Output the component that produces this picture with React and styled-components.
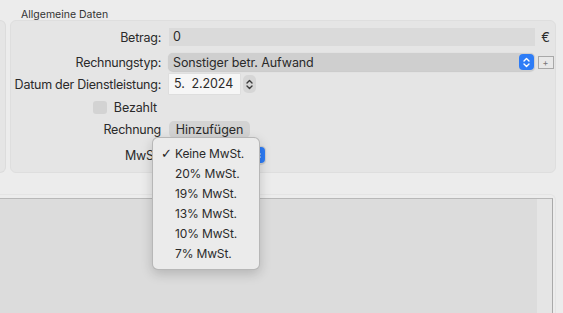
import React from 'react'
import styled, { createGlobalStyle } from 'styled-components'

const GlobalStyle = createGlobalStyle`
    html, body {
        margin: 0;
        padding: 0;
        background: #ececec;
    }
    * {
        box-sizing: border-box;
    }
`

const menuItems = [
    { label: 'Keine MwSt.', checked: true },
    { label: '20% MwSt.' },
    { label: '19% MwSt.' },
    { label: '13% MwSt.' },
    { label: '10% MwSt.' },
    { label: '7% MwSt.' },
]

const Chevrons = ({ color = '#fff', w = 7, h = 11 }) => (
    <svg width={w} height={h} viewBox="0 0 7 11" fill="none">
        <path d="M1 4 L3.5 1.5 L6 4" stroke={color} strokeWidth="1.4" strokeLinecap="round" strokeLinejoin="round" />
        <path d="M1 7 L3.5 9.5 L6 7" stroke={color} strokeWidth="1.4" strokeLinecap="round" strokeLinejoin="round" />
    </svg>
)

const App = () => {
    return (
        <Window>
            <GlobalStyle />
            <TopArea>
                <SidePanel />
                <Section>
                    <Title>Allgemeine Daten</Title>
                    <GroupBox>
                        <Row $mt={6}>
                            <Label>Betrag:</Label>
                            <TextField>0</TextField>
                            <Trailing>€</Trailing>
                        </Row>
                        <Row $mt={5}>
                            <Label>Rechnungstyp:</Label>
                            <PopUp $grow>
                                <span>Sonstiger betr. Aufwand</span>
                                <BlueArrows><Chevrons /></BlueArrows>
                            </PopUp>
                            <Trailing>
                                <SmallButton>+</SmallButton>
                            </Trailing>
                        </Row>
                        <Row $mt={2}>
                            <Label>Datum der Dienstleistung:</Label>
                            <DateField>5.&nbsp;&nbsp;2.2024</DateField>
                            <Stepper><Chevrons color="#3a3a3a" /></Stepper>
                        </Row>
                        <Row $mt={3}>
                            <CheckCell>
                                <CheckBox />
                                <span>Bezahlt</span>
                            </CheckCell>
                        </Row>
                        <Row $mt={2}>
                            <Label>Rechnung</Label>
                            <PushButton>Hinzufügen</PushButton>
                        </Row>
                        <Row $mt={6}>
                            <Label>MwSt:</Label>
                            <PopUp $w={98}>
                                <HiddenText>Keine MwSt.</HiddenText>
                                <BlueArrows><Chevrons /></BlueArrows>
                            </PopUp>
                        </Row>
                    </GroupBox>
                </Section>
            </TopArea>
            <BottomFrame>
                <TableArea>
                    <TableBody />
                    <ScrollTrack />
                </TableArea>
            </BottomFrame>
            <Menu>
                {menuItems.map((item) => (
                    <MenuItem key={item.label}>
                        <Check>{item.checked ? '✓' : ''}</Check>
                        {item.label}
                    </MenuItem>
                ))}
            </Menu>
        </Window>
    )
}

const Window = styled.div`
    position: relative;
    width: 100vw;
    height: 313px;
    overflow: hidden;
    background: #ececec;
    font-family: Inter, "Liberation Sans", sans-serif;
    font-size: 12.5px;
    letter-spacing: -0.1px;
    color: #2a2a2a;
    display: flex;
    flex-direction: column;
`

const TopArea = styled.div`
    display: flex;
    align-items: flex-start;
`

const SidePanel = styled.div`
    width: 6px;
    height: 153px;
    margin-top: 20px;
    background: #e5e5e5;
    border: 1px solid #dcdcdc;
    border-left: none;
    border-radius: 0 6px 6px 0;
`

const Section = styled.div`
    flex: 1;
    margin-left: 4px;
    margin-right: 7px;
    display: flex;
    flex-direction: column;
`

const Title = styled.div`
    height: 12px;
    margin-top: 8px;
    padding-left: 11px;
    font-size: 10.5px;
    line-height: 13px;
    letter-spacing: 0;
    color: #333;
`

const GroupBox = styled.div`
    height: 153px;
    background: #e5e5e5;
    border: 1px solid #dedede;
    border-radius: 6px;
    display: flex;
    flex-direction: column;
`

const Row = styled.div`
    display: flex;
    align-items: center;
    height: 20px;
    margin-top: ${(p) => p.$mt}px;
`

const Label = styled.div`
    width: 150px;
    flex-shrink: 0;
    text-align: right;
    margin-right: 8px;
    white-space: nowrap;
    letter-spacing: -0.25px;
`

const TextField = styled.div`
    flex: 1;
    height: 18px;
    line-height: 18px;
    padding-left: 4px;
    background: #dadada;
`

const Trailing = styled.div`
    width: 20px;
    flex-shrink: 0;
    display: flex;
    justify-content: center;
    padding-left: 1px;
    font-size: 13px;
`

const PopUp = styled.div`
    ${(p) => (p.$grow ? 'flex: 1;' : `width: ${p.$w}px;`)}
    height: 18px;
    margin-left: -1px;
    display: flex;
    align-items: center;
    justify-content: space-between;
    padding: 0 1px 0 5px;
    background: #cfcfcf;
    border-radius: 5px;
    box-shadow: 0 0.5px 1px rgba(0, 0, 0, 0.12);
`

const HiddenText = styled.span`
    visibility: hidden;
`

const BlueArrows = styled.div`
    width: 15px;
    height: 16px;
    border-radius: 4px;
    background: #2d7cf6;
    display: flex;
    align-items: center;
    justify-content: center;
`

const SmallButton = styled.div`
    width: 16px;
    height: 13px;
    border: 1px solid #a8a8a8;
    background: #e8e8e8;
    color: #777;
    font-size: 9px;
    line-height: 11px;
    text-align: center;
`

const DateField = styled.div`
    width: 71px;
    height: 20px;
    line-height: 20px;
    padding-left: 5px;
    background: #f6f6f6;
    box-shadow: 0 0 0 0.5px #d8d8d8;
`

const Stepper = styled.div`
    width: 13px;
    height: 18px;
    margin-left: 3px;
    border-radius: 5px;
    background: #d6d6d6;
    display: flex;
    align-items: center;
    justify-content: center;
`

const CheckCell = styled.div`
    width: 150px;
    display: flex;
    align-items: center;
    justify-content: flex-end;
    gap: 7px;
    padding-right: 4px;
`

const CheckBox = styled.div`
    width: 14px;
    height: 13px;
    border-radius: 3px;
    background: #d3d3d3;
`

const PushButton = styled.div`
    width: 81px;
    height: 17px;
    line-height: 17px;
    text-align: center;
    border-radius: 5px;
    background: #d3d3d3;
`

const BottomFrame = styled.div`
    margin-top: 21px;
    width: 556px;
    flex: 1;
    border-top: 1px solid #e4e4e4;
    border-right: 1px solid #e4e4e4;
    border-radius: 0 6px 0 0;
    padding: 3px 2px 0 0;
    display: flex;
`

const TableArea = styled.div`
    flex: 1;
    display: flex;
    border-top: 1px solid #b8b8b8;
    border-right: 1px solid #a9a9a9;
`

const TableBody = styled.div`
    flex: 1;
    background: #dcdcdc;
`

const ScrollTrack = styled.div`
    width: 15px;
    background: #e5e5e5;
`

const Menu = styled.div`
    position: absolute;
    left: 152px;
    top: 137px;
    width: 108px;
    padding: 6px 0 5px;
    background: #ebebeb;
    border: 1px solid rgba(0, 0, 0, 0.22);
    border-radius: 6px;
    box-shadow: 0 4px 12px rgba(0, 0, 0, 0.18);
`

const MenuItem = styled.div`
    height: 20px;
    line-height: 20px;
    display: flex;
    align-items: center;
    font-size: 12px;
    letter-spacing: -0.15px;
    color: #2a2a2a;
    white-space: nowrap;
`

const Check = styled.span`
    width: 22px;
    padding-left: 8px;
    font-family: "DejaVu Sans", sans-serif;
    font-size: 13px;
    font-weight: 700;
    color: #222;
`

export default App
